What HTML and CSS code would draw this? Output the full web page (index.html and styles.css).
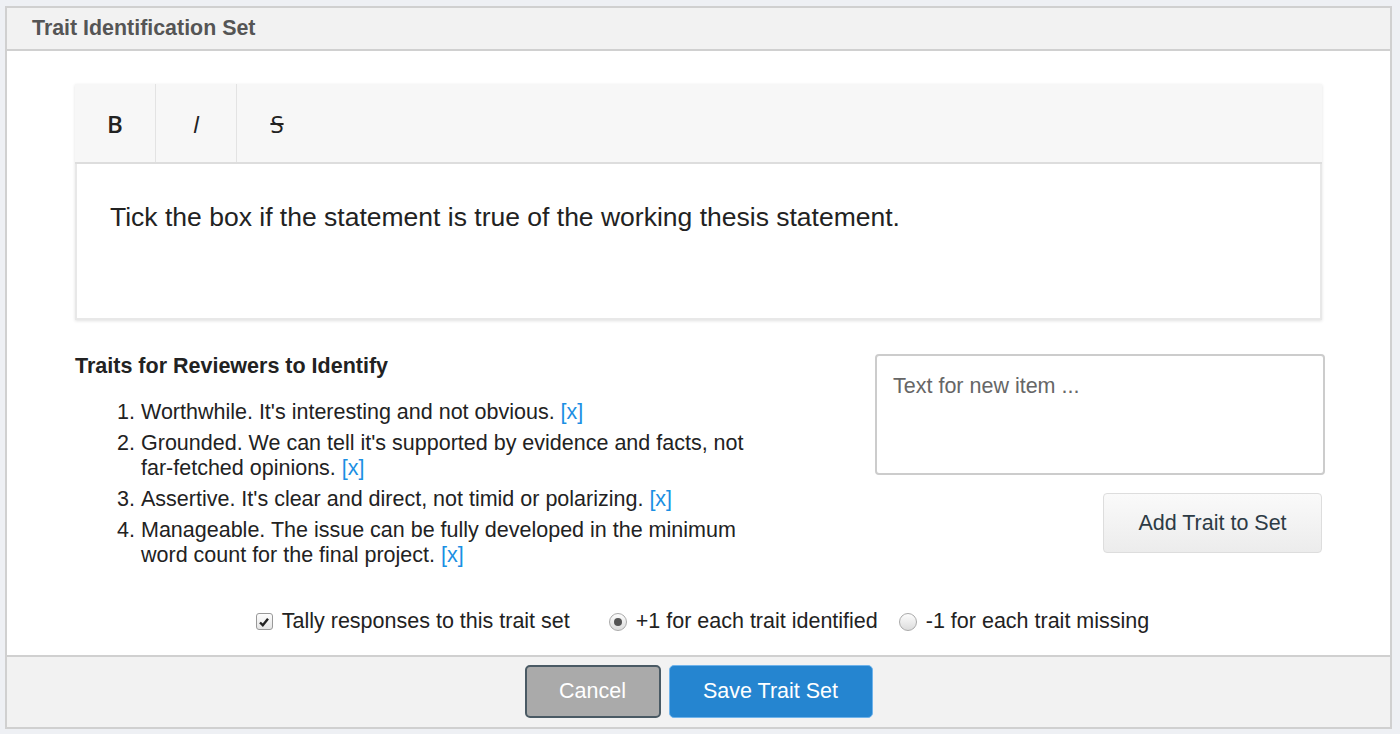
FILE: index.html
```html
<!DOCTYPE html>
<html lang="en">
<head>
  <meta charset="UTF-8">
  <title>Trait Identification Set</title>
  <link rel="stylesheet" href="styles.css">
</head>
<body>
  <div class="panel">
    <div class="panel-head">Trait Identification Set</div>

    <div class="panel-body">
      <div class="editor">
        <div class="toolbar">
          <span class="tool tool-b">B</span>
          <span class="tool tool-i">I</span>
          <span class="tool tool-s">S</span>
        </div>
        <div class="editor-text">Tick the box if the statement is true of the working thesis statement.</div>
      </div>

      <div class="traits">
        <div class="traits-left">
          <div class="traits-title">Traits for Reviewers to Identify</div>
          <ol class="trait-list">
            <li>Worthwhile. It's interesting and not obvious. <a class="remove">[x]</a></li>
            <li>Grounded. We can tell it's supported by evidence and facts, not far-fetched opinions. <a class="remove">[x]</a></li>
            <li>Assertive. It's clear and direct, not timid or polarizing. <a class="remove">[x]</a></li>
            <li>Manageable. The issue can be fully developed in the minimum word count for the final project. <a class="remove">[x]</a></li>
          </ol>
        </div>
        <div class="traits-right">
          <div class="new-item">Text for new item ...</div>
          <button class="btn-add">Add Trait to Set</button>
        </div>
      </div>

      <div class="options">
        <label class="opt opt-tally">
          <span class="checkbox">
            <svg width="12" height="12" viewBox="0 0 12 12"><path d="M2 6.5 L4.8 9.2 L10 2.8" fill="none" stroke="#222" stroke-width="2.4"/></svg>
          </span>
          Tally responses to this trait set
        </label>
        <label class="opt opt-plus"><span class="radio checked"></span>+1 for each trait identified</label>
        <label class="opt"><span class="radio"></span>-1 for each trait missing</label>
      </div>
    </div>

    <div class="panel-foot">
      <button class="btn-cancel">Cancel</button>
      <button class="btn-save">Save Trait Set</button>
    </div>
  </div>
</body>
</html>
```

FILE: styles.css
```css
body {
  margin: 0;
  background-color: #eef0f4;
  font-family: "Liberation Sans", Arial, sans-serif;
  color: #222;
}
.panel {
  margin: 6px 8px 6px 5px;
  border: 2px solid #d0d0d0;
  background-color: white;
}
.panel-head {
  background-color: #f2f2f2;
  border-bottom: 2px solid #d0d0d0;
  height: 41px;
  line-height: 41px;
  padding-left: 25px;
  font-size: 21.4px;
  font-weight: bold;
  color: #555;
}
.panel-body {
  padding: 33px 66px 0 68px;
}
.editor {
  width: 1247px;
  box-shadow: 0 1px 3px rgba(0,0,0,0.12);
}
.toolbar {
  display: flex;
  height: 78px;
  background-color: #f7f7f7;
  border-bottom: 2px solid #ddd;
}
.tool {
  width: 80px;
  border-right: 1px solid #e3e3e3;
  text-align: center;
  line-height: 80px;
  font-family: "Open Sans", sans-serif;
  font-size: 24px;
  color: #222;
}
.tool-b {
  font-weight: 600;
}
.tool-i {
  font-style: italic;
}
.tool-s {
  border-right: none;
  text-decoration: line-through;
}
.editor-text {
  height: 156px;
  border: 2px solid #e8e8e8;
  border-top: none;
  padding: 38px 0 0 33px;
  box-sizing: border-box;
  font-size: 26.5px;
  color: #222;
}
.traits {
  display: flex;
  justify-content: space-between;
  margin-top: 34px;
}
.traits-left {
  width: 690px;
}
.traits-title {
  font-size: 21.5px;
  font-weight: bold;
  line-height: 24px;
}
.trait-list {
  margin: 22px 0 0 0;
  padding-left: 66px;
  font-size: 21.5px;
  line-height: 25px;
}
.trait-list li {
  margin-bottom: 6px;
}
.remove {
  color: #1b8fe3;
}
.traits-right {
  width: 450px;
  margin-right: -1px;
  display: flex;
  flex-direction: column;
  align-items: flex-end;
}
.new-item {
  width: 100%;
  height: 121px;
  box-sizing: border-box;
  border: 2px solid #ccc;
  border-radius: 4px;
  padding: 18px 16px;
  font-size: 21.5px;
  color: #666;
}
.btn-add {
  margin: 18px 3px 0 0;
  width: 219px;
  height: 60px;
  border: 1px solid #ddd;
  border-radius: 4px;
  background: linear-gradient(#fafafa, #ececec);
  font-family: "Liberation Sans", Arial, sans-serif;
  font-size: 21.5px;
  color: #2d3b45;
}
.options {
  display: flex;
  justify-content: center;
  margin-top: 35px;
  padding-bottom: 21px;
  padding-left: 6px;
  font-size: 21.5px;
  line-height: 25px;
}
.opt {
  display: flex;
  align-items: center;
  gap: 9px;
}
.opt-tally {
  margin-right: 39px;
}
.opt-plus {
  margin-right: 21px;
}
.checkbox {
  width: 15px;
  height: 15px;
  border: 1px solid #999;
  border-radius: 3px;
  background: linear-gradient(#fdfdfd, #e4e4e4);
  display: flex;
  align-items: center;
  justify-content: center;
}
.radio {
  width: 16px;
  height: 16px;
  border: 1px solid #aaa;
  border-radius: 50%;
  background: linear-gradient(#fdfdfd, #dcdcdc);
  display: flex;
  align-items: center;
  justify-content: center;
}
.radio.checked::after {
  content: "";
  width: 8px;
  height: 8px;
  border-radius: 50%;
  background-color: #555;
}
.panel-foot {
  border-top: 2px solid #d0d0d0;
  background-color: #f2f2f2;
  display: flex;
  justify-content: center;
  gap: 8px;
  padding: 8px 0 9px 0;
}
.btn-cancel {
  width: 136px;
  height: 53px;
  background-color: #aaa;
  border: 2px solid #4a5a64;
  border-radius: 5px;
  color: white;
  font-family: "Liberation Sans", Arial, sans-serif;
  font-size: 21.5px;
}
.btn-save {
  width: 204px;
  height: 53px;
  background-color: #2585d0;
  border: 1px solid #6fb3eb;
  border-radius: 5px;
  color: white;
  font-family: "Liberation Sans", Arial, sans-serif;
  font-size: 21.5px;
}
```
